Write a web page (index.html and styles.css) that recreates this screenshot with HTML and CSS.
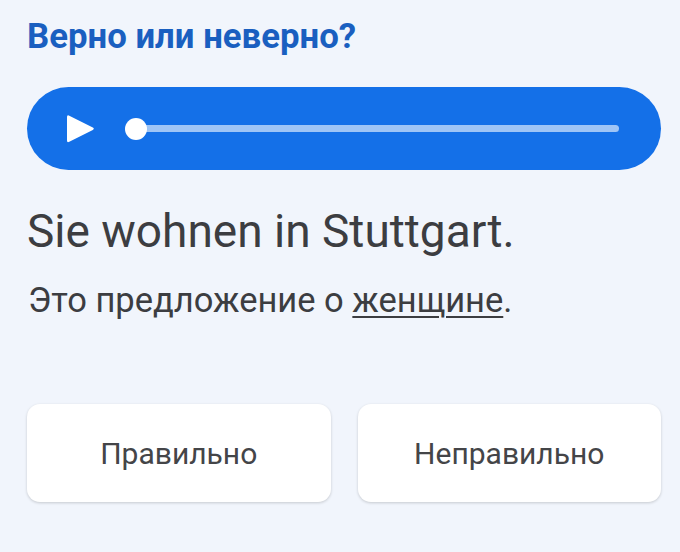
FILE: index.html
```html
<!DOCTYPE html>
<html lang="ru">
<head>
<meta charset="utf-8">
<link rel="stylesheet" href="styles.css">
</head>
<body>
<main class="page">
  <h1 class="title">Верно или неверно?</h1>
  <div class="player">
    <svg class="play" width="30" height="30" viewBox="0 0 30 30">
      <path d="M1 3 Q1 0.5 3.3 1.7 L26.8 13.6 Q28.8 14.75 26.8 15.9 L3.3 27.8 Q1 29 1 26.5 Z" fill="#fff"/>
    </svg>
    <div class="track"><div class="knob"></div></div>
  </div>
  <p class="sentence">Sie wohnen in Stuttgart.</p>
  <p class="hint">Это предложение о <span class="u">женщине</span>.</p>
  <div class="buttons">
    <button class="btn">Правильно</button>
    <button class="btn">Неправильно</button>
  </div>
</main>
</body>
</html>
```
FILE: styles.css
```css
html, body {
  margin: 0;
  padding: 0;
  background: #f1f5fc;
}
.page {
  width: 680px;
  height: 552px;
  box-sizing: border-box;
  padding: 16px 19px 0 27px;
  font-family: Roboto, "Noto Sans", sans-serif;
}
.title {
  margin: 0;
  font-size: 34.75px;
  font-weight: 700;
  color: #1a5fc0;
  line-height: 40px;
}
.player {
  margin-top: 31px;
  height: 83px;
  border-radius: 42px;
  background: #1470e8;
  display: flex;
  align-items: center;
  padding: 0 42px 0 39px;
}
.play {
  display: block;
  flex: none;
}
.track {
  flex: 1;
  margin-left: 40px;
  height: 7px;
  border-radius: 4px;
  background: #9fc5f6;
  position: relative;
}
.knob {
  position: absolute;
  left: -11px;
  top: -7.5px;
  width: 22px;
  height: 22px;
  border-radius: 50%;
  background: #fff;
}
.sentence {
  margin: 34px 0 0;
  font-size: 46px;
  line-height: 54px;
  color: #3c3d41;
}
.hint {
  margin: 22px 0 0;
  padding-left: 1px;
  font-size: 34.5px;
  line-height: 40px;
  color: #3c3d41;
}
.u {
  text-decoration: underline;
  text-underline-offset: 4px;
  text-decoration-thickness: 2px;
}
.buttons {
  margin-top: 84px;
  display: flex;
  gap: 27px;
}
.btn {
  flex: 1;
  height: 98px;
  border: none;
  border-radius: 13px;
  background: #fff;
  box-shadow: 0 1px 3px rgba(0,0,0,0.18);
  font-family: Roboto, "Noto Sans", sans-serif;
  font-size: 30px;
  color: #444548;
}
```
